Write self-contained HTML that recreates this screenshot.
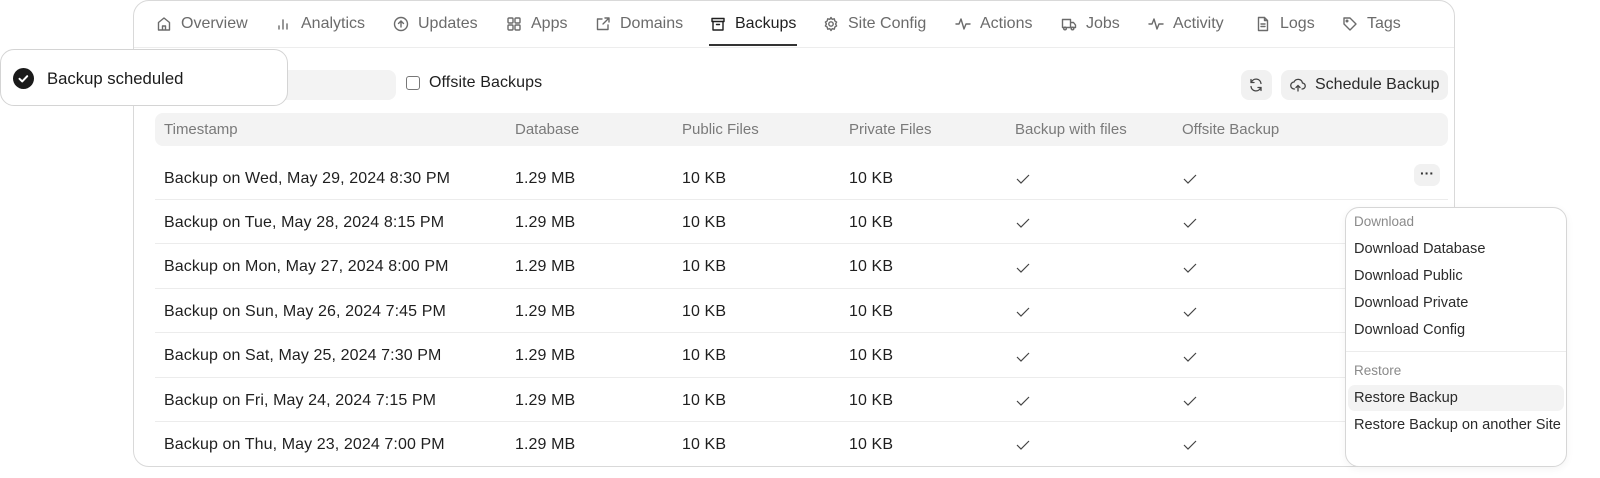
<!DOCTYPE html>
<html><head><style>
*{margin:0;padding:0;box-sizing:border-box}
body{width:1600px;height:478px;background:#fff;font-family:"Liberation Sans",sans-serif;position:relative;overflow:hidden;color:#1f1f1f}
.a{position:absolute;white-space:nowrap}
.card{left:133px;top:0;width:1322px;height:467px;border:1px solid #d9d9d9;border-radius:16px;background:#fff}
.tab{top:15px;font-size:16px;color:#6b6b6b;display:flex;align-items:center;gap:9px}
.tab svg{width:16px;height:16px;stroke:#6b6b6b;fill:none;stroke-width:1.4;stroke-linecap:round;stroke-linejoin:round}
.cell{font-size:16px;color:#1f1f1f;letter-spacing:0.1px}
.hd{font-size:15px;color:#7a7a7a;top:121px}
.line{height:1px;background:#ececec;left:155px;width:1293px}
.chk{width:14px;height:10px}
.mi{left:1354px;font-size:14.6px;color:#2b2b2b}
</style></head><body>
<div class="a card"></div>
<div class="a tab" style="left:156px"><svg viewBox="0 0 16 16"><path d="M2.5 6.5L8 2l5.5 4.5V14h-11z M6.5 14v-4h3v4"/></svg>Overview</div>
<div class="a tab" style="left:276px"><svg viewBox="0 0 16 16"><path d="M3 13v-3M7 13V4M11 13V8"/></svg>Analytics</div>
<div class="a tab" style="left:393px"><svg viewBox="0 0 16 16"><circle cx="8" cy="8" r="6.5"/><path d="M8 11V5M5.5 7.5L8 5l2.5 2.5"/></svg>Updates</div>
<div class="a tab" style="left:506px"><svg viewBox="0 0 16 16"><rect x="2" y="2" width="5" height="5" rx="1"/><rect x="9" y="2" width="5" height="5" rx="1"/><rect x="2" y="9" width="5" height="5" rx="1"/><rect x="9" y="9" width="5" height="5" rx="1"/></svg>Apps</div>
<div class="a tab" style="left:595px"><svg viewBox="0 0 16 16"><path d="M13 9v4.5H2.5V3H7M10 2h4v4M14 2L8 8"/></svg>Domains</div>
<div class="a tab" style="left:710px;color:#1f1f1f"><svg viewBox="0 0 16 16" style="stroke:#1f1f1f"><rect x="2" y="2.5" width="12" height="3"/><path d="M3 5.5V14h10V5.5M6.5 8.5h3"/></svg>Backups</div>
<div class="a" style="left:709px;top:44px;width:88px;height:2px;background:#333"></div>
<div class="a tab" style="left:823px"><svg viewBox="0 0 16 16"><circle cx="8" cy="8" r="2.2"/><path d="M8 1.5l1.2 1.8 2.1-.5.5 2.1 1.8 1.2-1 1.9 1 1.9-1.8 1.2-.5 2.1-2.1-.5L8 14.5l-1.2-1.8-2.1.5-.5-2.1L2.4 9.9l1-1.9-1-1.9 1.8-1.2.5-2.1 2.1.5z"/></svg>Site Config</div>
<div class="a tab" style="left:955px"><svg viewBox="0 0 16 16"><path d="M1 8h3l2-5 3 10 2-5h4"/></svg>Actions</div>
<div class="a tab" style="left:1061px"><svg viewBox="0 0 16 16"><path d="M1.5 3.5h8v8h-8zM9.5 6.5h3l2 2.5v2.5h-5"/><circle cx="4" cy="12.5" r="1.3"/><circle cx="11.5" cy="12.5" r="1.3"/></svg>Jobs</div>
<div class="a tab" style="left:1148px"><svg viewBox="0 0 16 16"><path d="M1 8h3l2-5 3 10 2-5h4"/></svg>Activity</div>
<div class="a tab" style="left:1255px"><svg viewBox="0 0 16 16"><path d="M3.5 1.5h6l3 3v10h-9zM9.5 1.5v3h3M6 8h4M6 10.5h4"/></svg>Logs</div>
<div class="a tab" style="left:1342px"><svg viewBox="0 0 16 16"><path d="M2 2h6l6 6-6 6-6-6z"/><circle cx="5" cy="5" r=".8"/></svg>Tags</div>
<div class="a" style="left:134px;top:47px;width:1320px;height:1px;background:#ededed"></div>

<div class="a" style="left:155px;top:70px;width:241px;height:30px;background:#f3f3f3;border-radius:8px"></div>
<div class="a" style="left:406px;top:76px;width:14px;height:14px;border:1.3px solid #777;border-radius:3px"></div>
<div class="a cell" style="left:429px;top:74px">Offsite Backups</div>
<div class="a" style="left:1241px;top:70px;width:31px;height:30px;background:#f1f1f1;border-radius:8px"><svg viewBox="0 0 16 16" style="position:absolute;left:7px;top:7px;width:16px;height:16px;fill:none;stroke:#444;stroke-width:1.3;stroke-linecap:round"><path d="M13 6.5A5 5 0 0 0 3.5 5M3 2.5v3h3M3 9.5A5 5 0 0 0 12.5 11M13 13.5v-3h-3"/></svg></div>
<div class="a" style="left:1281px;top:70px;width:167px;height:30px;background:#f1f1f1;border-radius:8px"><svg viewBox="0 0 16 16" style="position:absolute;left:9px;top:7px;width:16px;height:16px;fill:none;stroke:#444;stroke-width:1.3;stroke-linecap:round"><path d="M4.5 12A3.5 3.5 0 0 1 4 5a4.5 4.5 0 0 1 8.5 1A3 3 0 0 1 12 12M8 14V8.5M6 10.5l2-2 2 2"/></svg><span style="position:absolute;left:34px;top:6px;font-size:16px;color:#2b2b2b">Schedule Backup</span></div>

<div class="a" style="left:155px;top:113px;width:1293px;height:33px;background:#f3f3f3;border-radius:8px"></div>
<div class="a hd" style="left:164px">Timestamp</div>
<div class="a hd" style="left:515px">Database</div>
<div class="a hd" style="left:682px">Public Files</div>
<div class="a hd" style="left:849px">Private Files</div>
<div class="a hd" style="left:1015px">Backup with files</div>
<div class="a hd" style="left:1182px">Offsite Backup</div>

<div id="rows"></div>
<script>
var d=["Wed, May 29, 2024 8:30 PM","Tue, May 28, 2024 8:15 PM","Mon, May 27, 2024 8:00 PM","Sun, May 26, 2024 7:45 PM","Sat, May 25, 2024 7:30 PM","Fri, May 24, 2024 7:15 PM","Thu, May 23, 2024 7:00 PM"];
var h="",ck='<svg class="chk" viewBox="0 0 14 10" style="fill:none;stroke:#444;stroke-width:1.2"><path d="M1 5l4 4 8-8"/></svg>';
d.forEach(function(s,i){var y=169.5+i*44.4;
h+='<div class="a cell" style="left:164px;top:'+y+'px">Backup on '+s+'</div><div class="a cell" style="left:515px;top:'+y+'px">1.29 MB</div><div class="a cell" style="left:682px;top:'+y+'px">10 KB</div><div class="a cell" style="left:849px;top:'+y+'px">10 KB</div><div class="a" style="left:1016px;top:'+(y+1.5)+'px">'+ck+'</div><div class="a" style="left:1183px;top:'+(y+1.5)+'px">'+ck+'</div>';
if(i<6)h+='<div class="a line" style="top:'+(y+29.5)+'px"></div>';});
document.getElementById("rows").innerHTML=h;
</script>
<div class="a" style="left:1414px;top:164px;width:26px;height:22px;background:#f1f1f1;border-radius:7px;text-align:center;font-size:14px;font-weight:bold;line-height:18px;color:#333">···</div>

<div class="a" style="left:1345px;top:207px;width:222px;height:260px;background:#fff;border:1px solid #d6d6d6;border-radius:14px;box-shadow:0 2px 8px rgba(0,0,0,.05)"></div>
<div class="a mi" style="top:214px;font-size:13.5px;color:#8a8a8a">Download</div>
<div class="a mi" style="top:241px">Download Database</div>
<div class="a mi" style="top:268px">Download Public</div>
<div class="a mi" style="top:295px">Download Private</div>
<div class="a mi" style="top:322px">Download Config</div>
<div class="a" style="left:1346px;top:351px;width:220px;height:1px;background:#ececec"></div>
<div class="a mi" style="top:363px;font-size:13.5px;color:#8a8a8a">Restore</div>
<div class="a" style="left:1348px;top:385px;width:216px;height:26px;background:#f3f3f3;border-radius:7px"></div>
<div class="a mi" style="top:390px">Restore Backup</div>
<div class="a mi" style="top:417px">Restore Backup on another Site</div>

<div class="a" style="left:0;top:49px;width:288px;height:57px;background:#fff;border:1px solid #d4d4d4;border-radius:14px"></div>
<div class="a" style="left:13px;top:68px;width:21px;height:21px;background:#1a1a1a;border-radius:50%"><svg viewBox="0 0 21 21" style="width:21px;height:21px;fill:none;stroke:#fff;stroke-width:2;stroke-linecap:round;stroke-linejoin:round"><path d="M6.5 10.8l2.7 2.6 5-5.2"/></svg></div>
<div class="a" style="left:47px;top:69px;font-size:16.7px;color:#1a1a1a">Backup scheduled</div>
</body></html>
